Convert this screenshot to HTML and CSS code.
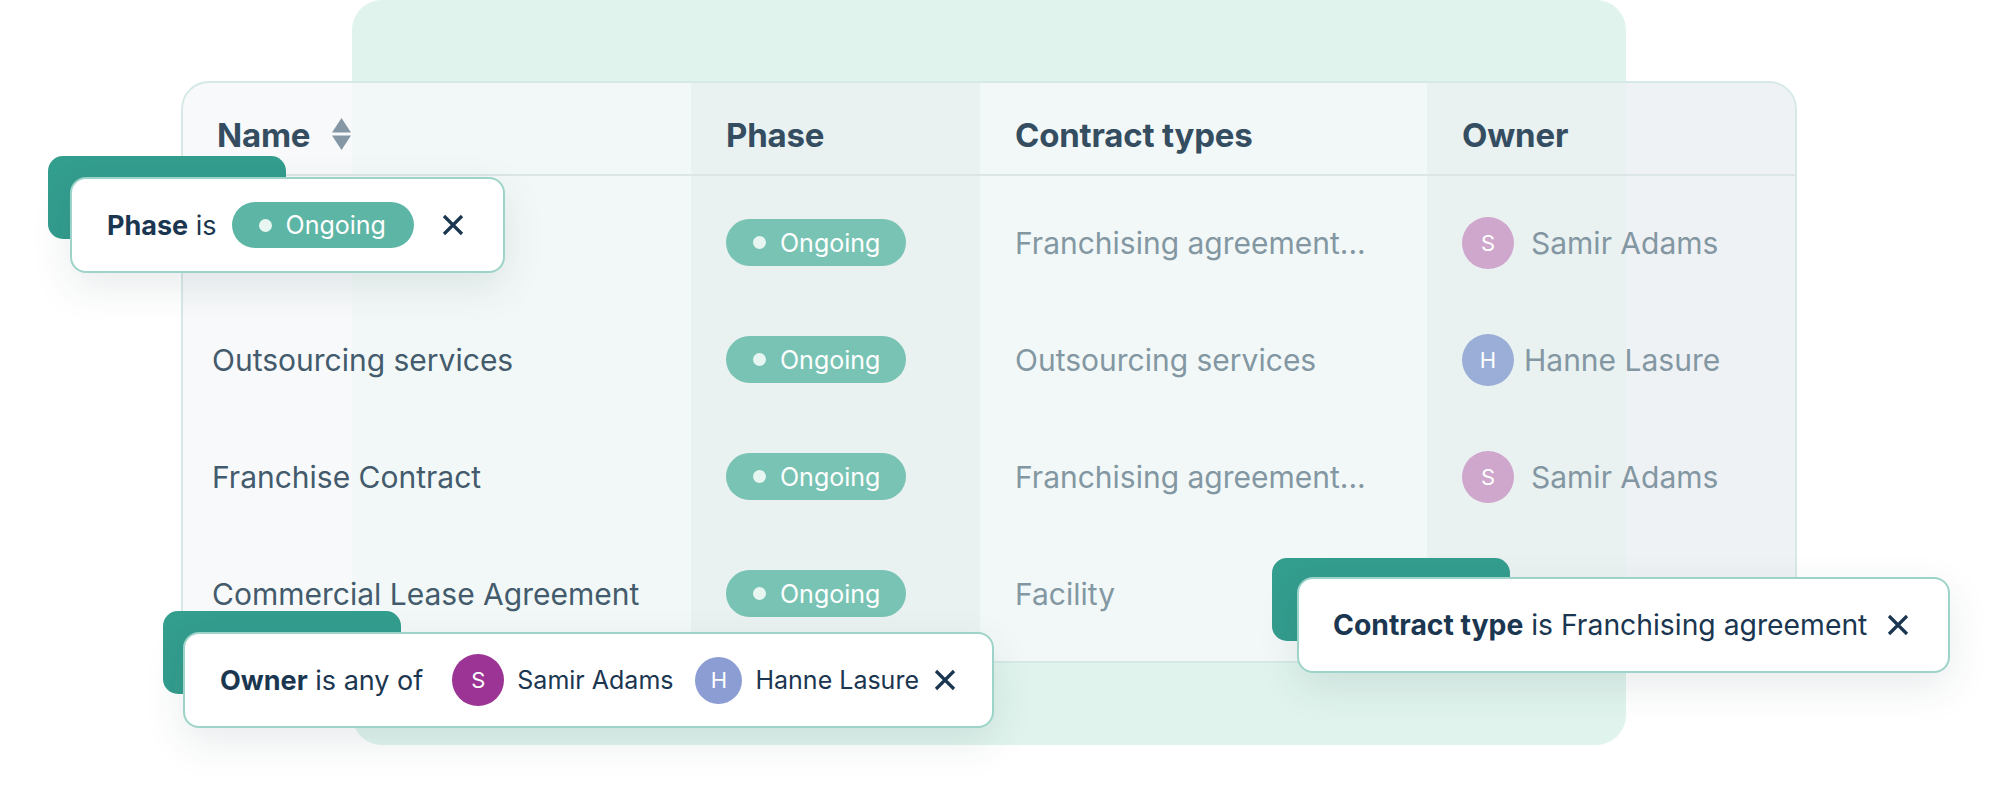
FILE: index.html
```html
<!DOCTYPE html>
<html lang="en">
<head>
    <meta charset="UTF-8">
    <meta name="viewport" content="width=device-width, initial-scale=1.0">
    <title>Contracts filters</title>
    <link rel="stylesheet" href="styles.css">
</head>
<body>
    <div class="stage">
        <div class="backdrop"></div>

        <div class="table">
            <div class="col col-name">
                <div class="th">Name
                    <svg class="sort" width="21" height="32" viewBox="0 0 21 32">
                        <path d="M10.5 0 L20 14.5 H1 Z" fill="#8597a4"/>
                        <path d="M1 17.5 H20 L10.5 32 Z" fill="#8597a4"/>
                    </svg>
                </div>
                <div class="td"></div>
                <div class="td">Outsourcing services</div>
                <div class="td">Franchise Contract</div>
                <div class="td">Commercial Lease Agreement</div>
            </div>
            <div class="col col-phase">
                <div class="th">Phase</div>
                <div class="td"><span class="pill"><i class="dot"></i>Ongoing</span></div>
                <div class="td"><span class="pill"><i class="dot"></i>Ongoing</span></div>
                <div class="td"><span class="pill"><i class="dot"></i>Ongoing</span></div>
                <div class="td"><span class="pill"><i class="dot"></i>Ongoing</span></div>
            </div>
            <div class="col col-type">
                <div class="th">Contract types</div>
                <div class="td muted">Franchising agreement...</div>
                <div class="td muted">Outsourcing services</div>
                <div class="td muted">Franchising agreement...</div>
                <div class="td muted">Facility</div>
            </div>
            <div class="col col-owner">
                <div class="th">Owner</div>
                <div class="td muted"><span class="avatar av-s">S</span><span class="owner-name">Samir Adams</span></div>
                <div class="td muted"><span class="avatar av-h">H</span><span class="owner-name tight">Hanne Lasure</span></div>
                <div class="td muted"><span class="avatar av-s">S</span><span class="owner-name">Samir Adams</span></div>
                <div class="td muted"></div>
            </div>
        </div>

        <!-- filter chips floating over the table -->
        <div class="filter filter-phase">
            <div class="filter-box">
                <b>Phase</b>&nbsp;is
                <span class="pill pill-strong"><i class="dot"></i>Ongoing</span>
                <svg class="close close-wide" width="22" height="22" viewBox="0 0 22 22"><path d="M2 2 L20 20 M20 2 L2 20"/></svg>
            </div>
        </div>

        <div class="filter filter-owner">
            <div class="filter-box">
                <b>Owner</b>&nbsp;is any of
                <span class="avatar av-s-strong">S</span><span class="chip-name">Samir Adams</span>
                <span class="avatar avatar-sm av-h-strong">H</span><span class="chip-name">Hanne Lasure</span>
                <svg class="close" width="22" height="22" viewBox="0 0 22 22"><path d="M2 2 L20 20 M20 2 L2 20"/></svg>
            </div>
        </div>

        <div class="filter filter-type">
            <div class="filter-box">
                <b>Contract type</b>&nbsp;is Franchising agreement
                <svg class="close close-mid" width="22" height="22" viewBox="0 0 22 22"><path d="M2 2 L20 20 M20 2 L2 20"/></svg>
            </div>
        </div>
    </div>
</body>
</html>
```

FILE: styles.css
```css
body {
    margin: 0;
    background: #fff;
    font-family: Inter, "Noto Sans", sans-serif;
    overflow: hidden;
}
.stage {
    position: relative;
    width: 2000px;
    height: 786px;
    padding: 81px 0 0 181px;
    box-sizing: border-box;
}
.backdrop {
    position: absolute;
    left: 352px;
    top: 0;
    width: 1274px;
    height: 745px;
    background: #e0f4ed;
    border-radius: 30px;
}
.table {
    position: relative;
    display: flex;
    width: 1616px;
    height: 582px;
    box-sizing: border-box;
    border: 2px solid #d6e9e6;
    border-radius: 28px;
    background: rgba(245, 248, 249, 0.84);
    overflow: hidden;
}
.col {
    display: flex;
    flex-direction: column;
    padding-bottom: 8px;
}
.col-name { width: 508px; }
.col-phase { width: 289px; background: rgba(40, 80, 80, 0.035); }
.col-type { width: 447px; }
.col-owner { flex: 1; background: rgba(40, 70, 80, 0.035); }

.th {
    height: 93px;
    box-sizing: border-box;
    padding: 12px 0 0 35px;
    display: flex;
    align-items: center;
    border-bottom: 2px solid #dde6e7;
    margin-bottom: 8px;
    font-size: 33px;
    font-weight: 700;
    color: #344d60;
    letter-spacing: -0.2px;
}
.col-name .th { padding-left: 34px; }
.sort {
    margin-left: 21px;
    margin-top: -2px;
}
.td {
    height: 117px;
    display: flex;
    align-items: center;
    padding-left: 35px;
    font-size: 30px;
    color: #435b6c;
}
.col-name .td { padding-left: 29px; }
.muted { color: #8397a3; }

.pill {
    display: inline-flex;
    align-items: center;
    height: 47px;
    padding: 0 26px 0 27px;
    border-radius: 24px;
    background: #79c3b4;
    color: #fff;
    font-size: 25px;
    box-sizing: border-box;
}
.dot {
    width: 13px;
    height: 13px;
    border-radius: 50%;
    background: #e8f6f2;
    margin-right: 14px;
}
.avatar {
    display: inline-flex;
    align-items: center;
    justify-content: center;
    width: 52px;
    height: 52px;
    border-radius: 50%;
    color: #fff;
    font-size: 22px;
    flex-shrink: 0;
}
.av-s { background: #cfa6cc; }
.av-h { background: #9baed8; }
.owner-name { margin-left: 17px; }
.owner-name.tight { margin-left: 10px; }

/* floating filter chips */
.filter {
    position: absolute;
    z-index: 2;
}
.filter::before {
    content: "";
    position: absolute;
    left: 0;
    top: 0;
    width: 238px;
    height: 83px;
    border-radius: 15px;
    background: #339d8e;
}
.filter-box {
    position: relative;
    display: flex;
    align-items: center;
    height: 96px;
    box-sizing: border-box;
    padding: 0 40px 0 35px;
    border: 2px solid #9dd3c8;
    border-radius: 16px;
    background: #fff;
    box-shadow: 0 14px 40px rgba(30, 60, 70, 0.1);
    font-size: 27px;
    color: #1b3650;
    white-space: nowrap;
}
.filter-box b { font-weight: 700; }
.filter-phase { left: 48px; top: 156px; }
.filter-phase .filter-box { margin: 21px 0 0 22px; width: 435px; }
.filter-owner { left: 163px; top: 611px; }
.filter-owner .filter-box { margin: 21px 0 0 20px; width: 811px; }
.filter-type { left: 1272px; top: 558px; }
.filter-type .filter-box { margin: 19px 0 0 25px; width: 653px; padding-left: 34px; font-size: 28.3px; }

.pill-strong {
    background: #5db5a5;
    height: 46px;
    margin-left: 15px;
    padding-right: 28px;
}
.close {
    flex-shrink: 0;
    margin-left: 15px;
    stroke: #1b3650;
    stroke-width: 3.2;
    fill: none;
}
.close-wide { margin-left: 28px; }
.close-mid { margin-left: 20px; }
.av-s-strong {
    background: #9b3494;
    margin-left: 29px;
}
.av-h-strong {
    background: #8b9dd3;
    margin-left: 22px;
}
.avatar-sm {
    width: 47px;
    height: 47px;
}
.chip-name {
    margin-left: 13px;
    font-size: 25px;
}
```
